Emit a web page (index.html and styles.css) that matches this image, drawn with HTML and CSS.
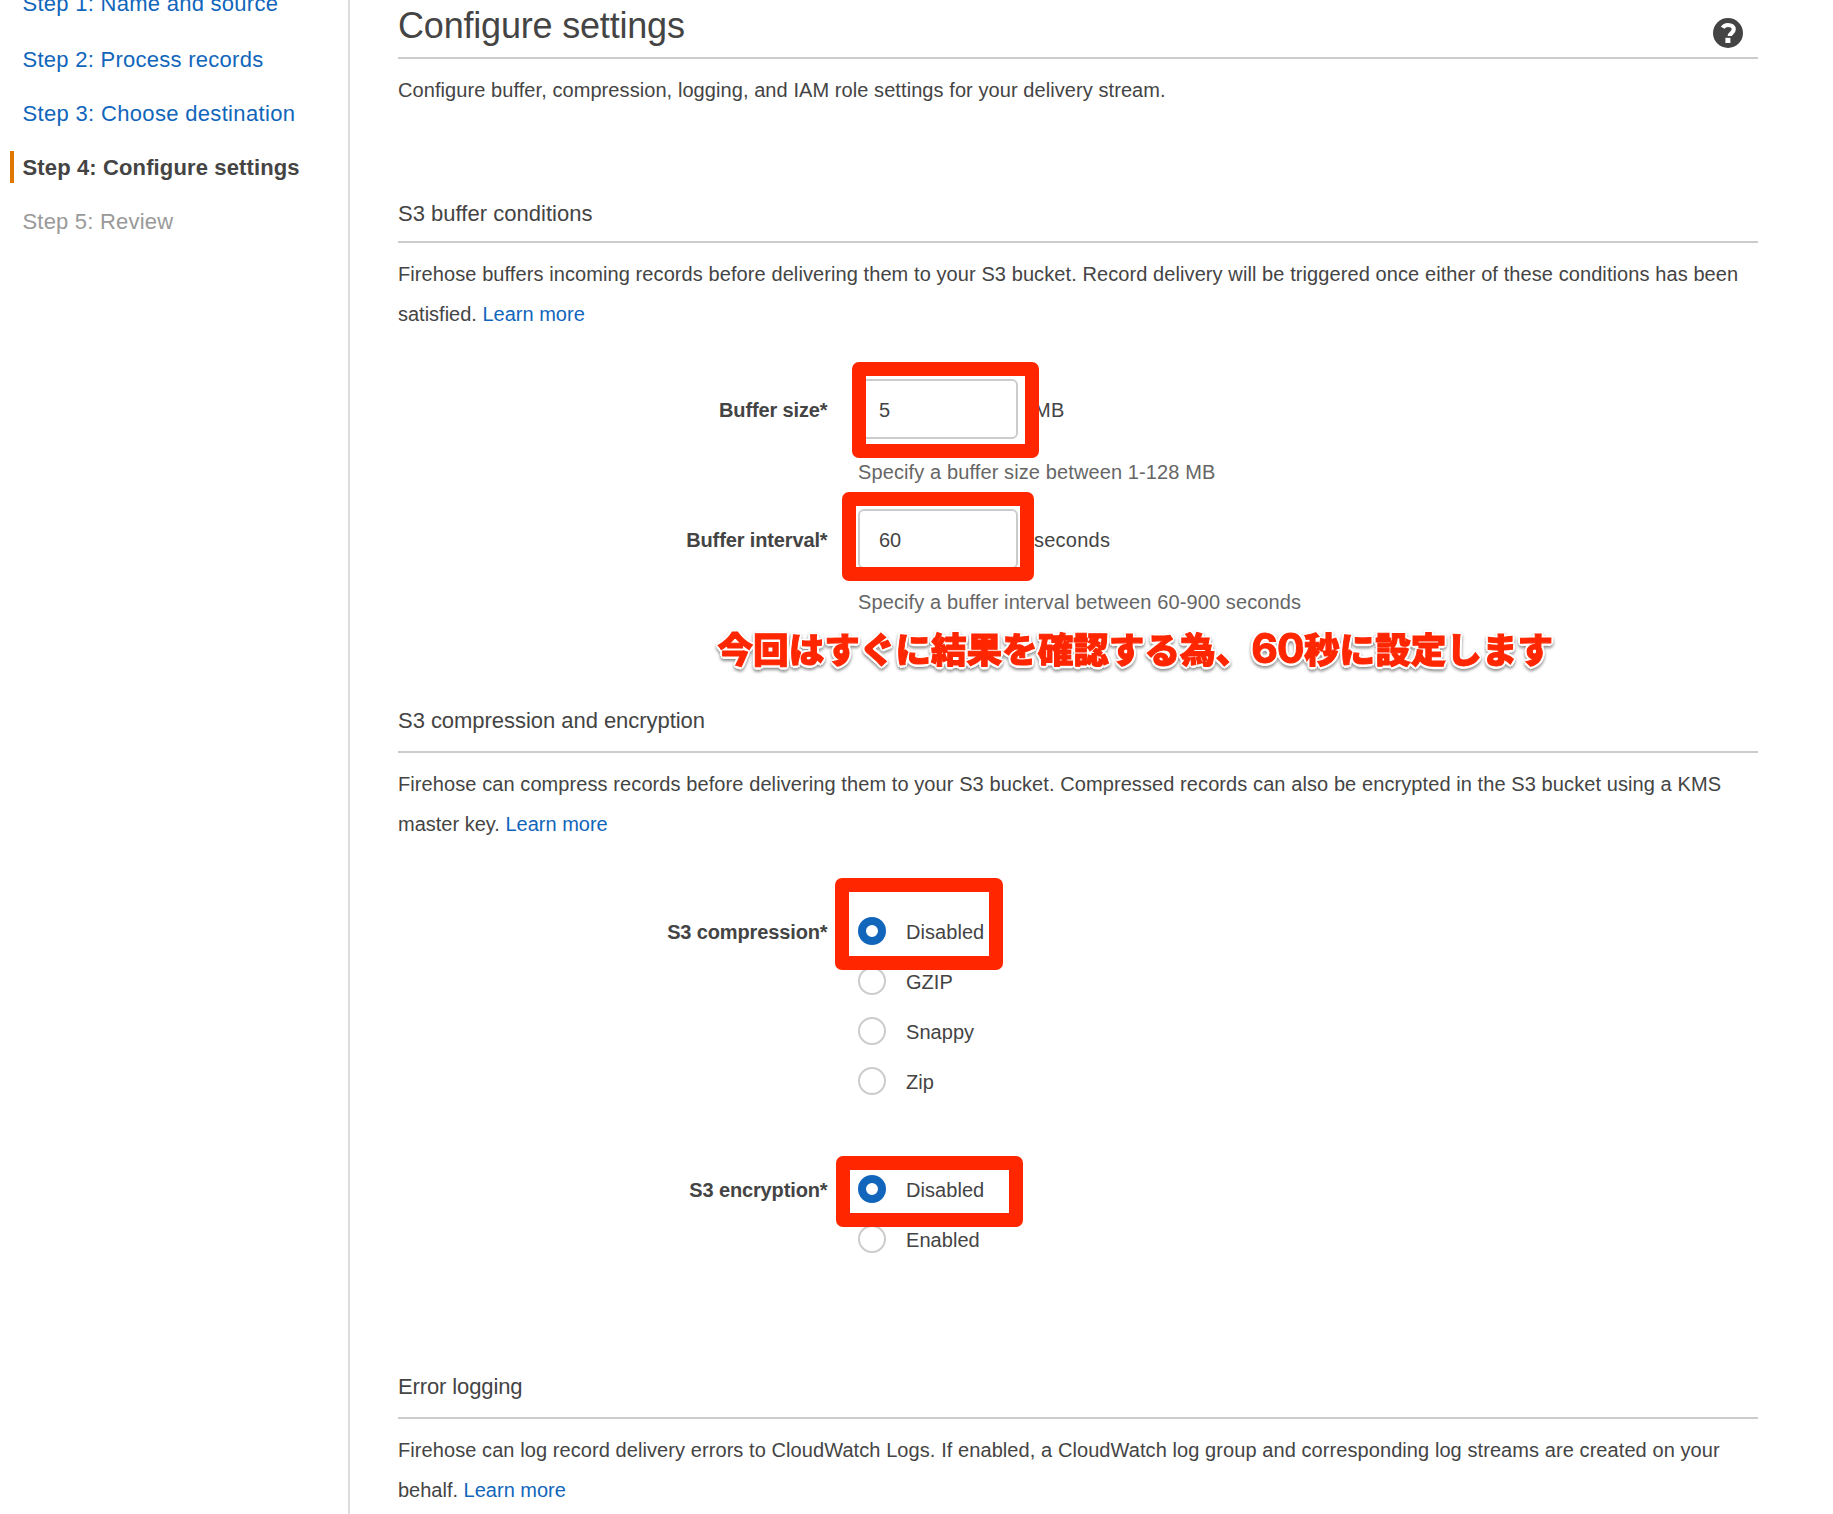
FILE: index.html
```html
<!DOCTYPE html>
<html lang="en">
<head>
<meta charset="utf-8">
<title>Configure settings</title>
<link rel="stylesheet" href="styles.css">
</head>
<body>
<div class="page">
  <nav class="steps">
    <a class="step step-first" href="#">Step 1: Name and source</a>
    <a class="step" href="#">Step 2: Process records</a>
    <a class="step step-wide" href="#">Step 3: Choose destination</a>
    <span class="step step-current">Step 4: Configure settings</span>
    <span class="step step-pending">Step 5: Review</span>
  </nav>

  <main class="content">
    <header class="page-header">
      <h1>Configure settings</h1>
      <svg class="help" width="30" height="30" viewBox="0 0 30 30">
        <circle cx="15" cy="15" r="15" fill="#444"/>
        <path d="M9.7 9.7C10.7 7.9 12.6 7 15 7c3.6 0 5.7 1.8 5.7 4.5 0 3.4-4 3.6-4 6.5" fill="none" stroke="#fff" stroke-width="4.2"/>
        <rect x="12.4" y="19.8" width="5" height="5.2" fill="#fff"/>
      </svg>
    </header>
    <p class="lead">Configure buffer, compression, logging, and IAM role settings for your delivery stream.</p>

    <section class="section section-buffer">
      <h2>S3 buffer conditions</h2>
      <p><span class="line">Firehose buffers incoming records before delivering them to your S3 bucket. Record delivery will be triggered once either of these conditions has been</span><br><span class="tail">satisfied. <a href="#">Learn more</a></span></p>
      <div class="fields">
        <div class="field">
          <label class="name name-input" for="size">Buffer size*</label>
          <div class="control">
            <div class="entry"><input id="size" type="text" value="5"><span class="unit">MB</span></div>
            <div class="hint">Specify a buffer size between 1-128 MB</div>
          </div>
          <div class="mark mark-size"></div>
        </div>
        <div class="field">
          <label class="name name-input" for="interval">Buffer interval*</label>
          <div class="control">
            <div class="entry"><input id="interval" type="text" value="60"><span class="unit">seconds</span></div>
            <div class="hint">Specify a buffer interval between 60-900 seconds</div>
          </div>
          <div class="mark mark-interval"></div>
          <div class="note" lang="ja">今回はすぐに結果を確認する為、<span class="digits">60</span>秒に設定します</div>
        </div>
      </div>
    </section>

    <section class="section section-compression">
      <h2>S3 compression and encryption</h2>
      <p><span class="line">Firehose can compress records before delivering them to your S3 bucket. Compressed records can also be encrypted in the S3 bucket using a KMS</span><br><span class="tail">master key. <a href="#">Learn more</a></span></p>
      <div class="choices">
        <div class="field">
          <div class="name">S3 compression*</div>
          <div class="options">
            <label class="option"><input type="radio" name="compression" checked>Disabled</label>
            <label class="option"><input type="radio" name="compression">GZIP</label>
            <label class="option"><input type="radio" name="compression">Snappy</label>
            <label class="option"><input type="radio" name="compression">Zip</label>
          </div>
          <div class="mark mark-compression"></div>
        </div>
        <div class="field">
          <div class="name">S3 encryption*</div>
          <div class="options">
            <label class="option"><input type="radio" name="encryption" checked>Disabled</label>
            <label class="option"><input type="radio" name="encryption">Enabled</label>
          </div>
          <div class="mark mark-encryption"></div>
        </div>
      </div>
    </section>

    <section class="section section-logging">
      <h2>Error logging</h2>
      <p><span class="line line-log">Firehose can log record delivery errors to CloudWatch Logs. If enabled, a CloudWatch log group and corresponding log streams are created on your</span><br><span class="tail">behalf. <a href="#">Learn more</a></span></p>
    </section>
  </main>
</div>
</body>
</html>
```
FILE: styles.css
```css
* { box-sizing: border-box; }

html, body {
  margin: 0;
  height: 1514px;
  overflow: hidden;
}

body {
  background: #fff;
  color: #444;
  font: 20px/40px "Liberation Sans", Arial, sans-serif;
}

a { color: #16b; text-decoration: none; }

.page { display: flex; height: 1514px; overflow: hidden; }

/* Wizard steps */
.steps {
  flex: none;
  width: 350px;
  padding-left: 10px;
  border-right: 2px solid #ddd;
  display: flex;
  flex-direction: column;
  gap: 22px;
}

.step {
  flex: none;
  height: 32px;
  line-height: 34px;
  padding-left: 12.5px;
  font-size: 22px;
  letter-spacing: 0.27px;
  white-space: nowrap;
}

.step-first { margin-top: -13px; margin-bottom: 2px; }
.step-wide { letter-spacing: 0.33px; }

.step-current {
  border-left: 4px solid #e07700;
  padding-left: 8.5px;
  font-weight: bold;
  letter-spacing: 0.13px;
}

.step-pending { color: #999; letter-spacing: 0.2px; }

/* Main column */
.content { flex: none; width: 1408px; padding-left: 48px; }

.page-header {
  display: flex;
  justify-content: space-between;
  height: 59px;
  padding: 5px 15px 0 0;
  border-bottom: 2px solid #ccc;
}

h1 {
  margin: 0;
  font-size: 36px;
  font-weight: normal;
  line-height: 41px;
  letter-spacing: -0.19px;
}

.help { margin-top: 13px; }

p { margin: 11px 0 0; white-space: nowrap; }
.lead { letter-spacing: 0.075px; }
.line { letter-spacing: 0.088px; }
.line-log { letter-spacing: 0.079px; }

h2 {
  margin: 0;
  padding-bottom: 15px;
  border-bottom: 2px solid #ccc;
  font-size: 22px;
  font-weight: normal;
  line-height: 30px;
  letter-spacing: -0.04px;
}

.section-buffer { margin-top: 89px; }
.section-buffer h2 { padding-bottom: 12px; letter-spacing: 0.02px; }
.section-compression { margin-top: 94px; }
.section-logging { margin-top: 119px; }
.section-logging h2 { letter-spacing: -0.12px; }

/* Form rows */
.field {
  position: relative;
  display: grid;
  grid-template-columns: 429.5px 1fr;
  column-gap: 30.5px;
}

.fields { margin-top: 45px; display: grid; gap: 27px; }
.choices { margin-top: 73px; display: grid; gap: 80px; }

.name {
  font-weight: bold;
  line-height: 30px;
  text-align: right;
  letter-spacing: -0.13px;
}

.name-input { line-height: 62px; }

.entry { display: flex; gap: 16px; line-height: 62px; }

input[type="text"] {
  width: 160px;
  height: 60px;
  padding: 2px 0 0 19px;
  border: 2px solid #ccc;
  border-radius: 6px;
  background: #fff;
  color: #444;
  font: inherit;
}

.unit { letter-spacing: 0.25px; height: 60px; }

.hint {
  margin-top: 23px;
  line-height: 20px;
  color: #666;
  letter-spacing: 0.113px;
}

.options { display: grid; gap: 22px; }

.option {
  display: flex;
  height: 28px;
  gap: 20px;
  line-height: 30px;
  letter-spacing: 0.05px;
}

input[type="radio"] {
  appearance: none;
  flex: none;
  width: 28px;
  height: 28px;
  margin: 0;
  border: 2px solid #ccc;
  border-radius: 50%;
  background: #fff;
}

input[type="radio"]:checked { border: 8px solid #16b; }

/* Red annotations drawn over the form */
.mark {
  position: absolute;
  border: 14px solid #ff2600;
  border-radius: 7px;
}

.mark-size { left: 453.5px; top: -17px; width: 187.5px; height: 96px; }
.mark-interval { left: 444px; top: -17px; width: 192px; height: 89px; }
.mark-compression { left: 437px; top: -39px; width: 168px; height: 92px; }
.mark-encryption { left: 438px; top: -19px; width: 187px; height: 71px; }

.note {
  position: absolute;
  left: 319.5px;
  top: 114px;
  height: 50px;
  line-height: 50px;
  color: #ff2600;
  font-family: "Noto Sans CJK JP", sans-serif;
  font-size: 35.6px;
  font-weight: 900;
  white-space: nowrap;
  -webkit-text-stroke: 1px #ff2600;
  text-shadow:
    2.5px 0 #fff, -2.5px 0 #fff, 0 2.5px #fff, 0 -2.5px #fff,
    1.8px 1.8px #fff, -1.8px 1.8px #fff, 1.8px -1.8px #fff, -1.8px -1.8px #fff;
  filter: drop-shadow(0 2px 1.5px rgba(0, 0, 0, 0.45));
}

.digits {
  font-family: Inter, sans-serif;
  font-size: 41px;
  font-weight: 700;
  letter-spacing: -0.7px;
}
```
